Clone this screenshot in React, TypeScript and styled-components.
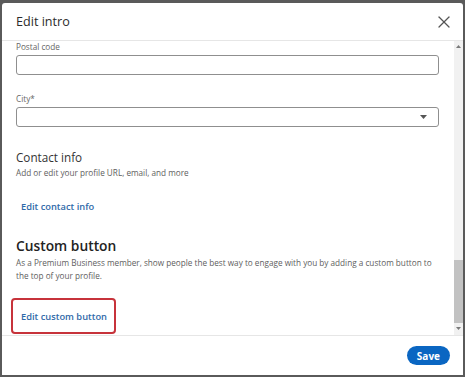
import React, { FC } from 'react'
import styled, { createGlobalStyle } from 'styled-components'
import { X } from 'lucide-react'

const GlobalStyle = createGlobalStyle`
  html, body {
    margin: 0;
    padding: 0;
    background: #5a5a5a;
  }
  body {
    font-family: "Open Sans", "Noto Sans", sans-serif;
    color: #333;
  }
  * {
    box-sizing: border-box;
  }
`

const Backdrop = styled.div`
  width: 465px;
  height: 377px;
  padding: 3px 2px 2px 2px;
  background: #5a5a5a;
`

const Modal = styled.div`
  display: flex;
  flex-direction: column;
  height: 100%;
  background: #fff;
  border-radius: 3px 3px 0 0;
  overflow: hidden;
`

const Header = styled.header`
  display: flex;
  align-items: center;
  justify-content: space-between;
  flex: none;
  height: 38px;
  padding: 0 9px 0 14px;
  border-bottom: 1px solid #e6e6e6;
`

const Title = styled.h2`
  margin: 0;
  font-size: 12.6px;
  font-weight: 500;
  color: #2b2b2b;
`

const CloseButton = styled.button`
  display: flex;
  align-items: center;
  justify-content: center;
  width: 20px;
  height: 20px;
  padding: 0;
  border: none;
  background: none;
  color: #555;
`

const Body = styled.div`
  display: flex;
  flex: 1;
  min-height: 0;
`

const Content = styled.div`
  flex: 1;
  min-width: 0;
  overflow: hidden;
  padding: 0 15px 3px 14px;
`

/* scrollbar drawn as the page shows it: scrolled to the end */
const ScrollBar = styled.div`
  display: flex;
  flex-direction: column;
  flex: none;
  width: 9px;
  padding-bottom: 2px;
  background: #f1f1f1;
`

const ScrollArrow = styled.div`
  display: flex;
  align-items: center;
  justify-content: center;
  flex: none;
  height: 10px;
  color: #7a7a7a;
`

const ScrollTrack = styled.div`
  display: flex;
  flex-direction: column;
  justify-content: flex-end;
  flex: 1;
`

const ScrollThumb = styled.div<{ $size: number }>`
  height: ${p => p.$size}px;
  background: #c2c2c2;
`

const Field = styled.div<{ $last?: boolean }>`
  margin-bottom: ${p => (p.$last ? 0 : 18)}px;
`

const Label = styled.label`
  display: block;
  margin-bottom: 2px;
  font-size: 8.2px;
  line-height: 12px;
  color: #666;
`

const Input = styled.input`
  display: block;
  width: 100%;
  height: 20px;
  margin: 0;
  padding: 0 8px;
  border: 1px solid #8f8f8f;
  border-radius: 3px;
  background: #fff;
  font: inherit;
`

const SelectBox = styled.div`
  display: flex;
  align-items: center;
  justify-content: flex-end;
  height: 20px;
  padding-right: 11px;
  border: 1px solid #8f8f8f;
  border-radius: 3px;
  color: #555;
`

const Section = styled.section<{ $gap: number }>`
  margin-top: ${p => p.$gap}px;
`

const SectionTitle = styled.h3<{ $strong?: boolean }>`
  margin: 0;
  font-size: ${p => (p.$strong ? 13.8 : 11.7)}px;
  line-height: ${p => (p.$strong ? 20 : 18)}px;
  font-weight: ${p => (p.$strong ? 600 : 400)};
  color: ${p => (p.$strong ? '#232323' : '#333')};
`

const SectionText = styled.p`
  margin: 0;
  font-size: 8.2px;
  line-height: 13px;
  color: #5e5e5e;
`

const LinkButton = styled.button<{ $gap: number; $highlight?: boolean }>`
  display: block;
  height: 32px;
  margin: ${p => p.$gap}px 0 0 -3px;
  padding: 0 7px 0 8px;
  border: none;
  border-radius: 2px;
  background: none;
  font-family: inherit;
  font-size: 9.3px;
  font-weight: 600;
  color: #2f6aa9;
  outline: ${p => (p.$highlight ? '2px solid #c7333b' : 'none')};
`

const Footer = styled.footer`
  display: flex;
  align-items: center;
  justify-content: flex-end;
  flex: none;
  height: 40px;
  padding-right: 13px;
  border-top: 1px solid #e6e6e6;
`

const SaveButton = styled.button`
  height: 19px;
  padding: 0 10px;
  border: none;
  border-radius: 10px;
  background: #0a66c2;
  font-family: inherit;
  font-size: 10px;
  font-weight: 700;
  color: #fff;
`

const Caret: FC<{ up?: boolean; w?: number; h?: number }> = ({ up, w = 7, h = 4 }) => (
  <svg width={w} height={h} viewBox="0 0 7 4">
    <path d={up ? 'M3.5 0L7 4H0z' : 'M0 0h7L3.5 4z'} fill="currentColor" />
  </svg>
)

const TextField: FC<{ label: string; last?: boolean }> = ({ label, last }) => (
  <Field $last={last}>
    <Label>{label}</Label>
    <Input />
  </Field>
)

const SelectField: FC<{ label: string; last?: boolean }> = ({ label, last }) => (
  <Field $last={last}>
    <Label>{label}</Label>
    <SelectBox>
      <Caret />
    </SelectBox>
  </Field>
)

const App: FC = () => {
  return (
    <>
      <GlobalStyle />
      <Backdrop>
        <Modal>
          <Header>
            <Title>Edit intro</Title>
            <CloseButton aria-label="Dismiss">
              <X size={20} strokeWidth={1.5} />
            </CloseButton>
          </Header>
          <Body>
            <Content>
              <TextField label="Postal code" />
              <SelectField label="City*" last />

              <Section $gap={21}>
                <SectionTitle>Contact info</SectionTitle>
                <SectionText>Add or edit your profile URL, email, and more</SectionText>
                <LinkButton $gap={11}>Edit contact info</LinkButton>
              </Section>

              <Section $gap={14}>
                <SectionTitle $strong>Custom button</SectionTitle>
                <SectionText>
                  As a Premium Business member, show people the best way to engage with you by adding a custom button to the top of your profile.
                </SectionText>
                <LinkButton $gap={18} $highlight>
                  Edit custom button
                </LinkButton>
              </Section>
            </Content>
            <ScrollBar>
              <ScrollArrow>
                <Caret up w={5} h={3} />
              </ScrollArrow>
              <ScrollTrack>
                <ScrollThumb $size={63} />
              </ScrollTrack>
              <ScrollArrow>
                <Caret w={5} h={3} />
              </ScrollArrow>
            </ScrollBar>
          </Body>
          <Footer>
            <SaveButton>Save</SaveButton>
          </Footer>
        </Modal>
      </Backdrop>
    </>
  )
}

export default App
